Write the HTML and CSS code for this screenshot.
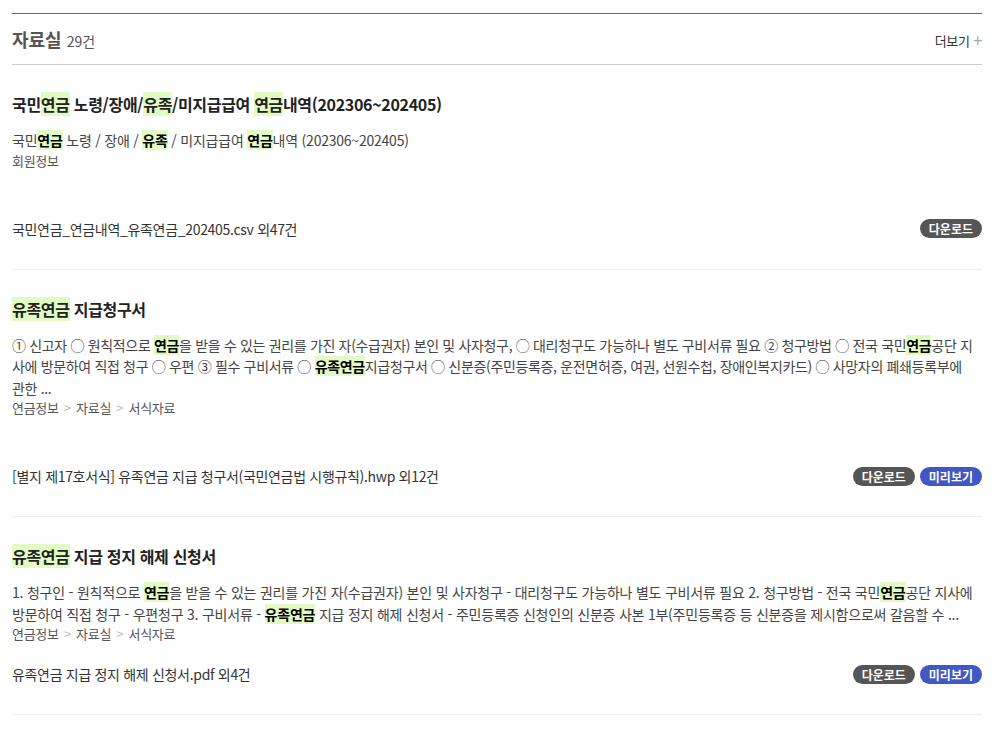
FILE: index.html
```html
<!DOCTYPE html>
<html lang="ko">
<head>
    <meta charset="UTF-8">
    <meta name="viewport" content="width=device-width, initial-scale=1.0">
    <title>자료실</title>
    <link rel="stylesheet" href="styles.css">
</head>
<body>

<div class="section">
    <div class="section-head">
        <h2>자료실 <span class="count">29건</span></h2>
        <a class="more" href="#">더보기 <span class="plus">+</span></a>
    </div>

    <div class="item">
        <h3 class="item-title">국민<em>연금</em> 노령/장애/<em>유족</em>/미지급급여 <em>연금</em>내역(202306~202405)</h3>
        <p class="desc">국민<em>연금</em> 노령 / 장애 / <em>유족</em> / 미지급급여 <em>연금</em>내역 (202306~202405)</p>
        <p class="path">회원정보</p>
        <div class="file-row spaced">
            <span class="file-name">국민연금_연금내역_유족연금_202405.csv 외47건</span>
            <div class="buttons">
                <a class="btn btn-down" href="#">다운로드</a>
            </div>
        </div>
    </div>

    <div class="item">
        <h3 class="item-title"><em>유족연금</em> 지급청구서</h3>
        <p class="desc tight">① 신고자 ◯ 원칙적으로 <em>연금</em>을 받을 수 있는 권리를 가진 자(수급권자) 본인 및 사자청구, ◯ 대리청구도 가능하나 별도 구비서류 필요 ② 청구방법 ◯ 전국 국민<em>연금</em>공단 지사에 방문하여 직접 청구 ◯ 우편 ③ 필수 구비서류 ◯ <em>유족연금</em>지급청구서 ◯ 신분증(주민등록증, 운전면허증, 여권, 선원수첩, 장애인복지카드) ◯ 사망자의 폐쇄등록부에<br>관한 ...</p>
        <p class="path">연금정보 <span class="sep">&gt;</span> 자료실 <span class="sep">&gt;</span> 서식자료</p>
        <div class="file-row spaced">
            <span class="file-name">[별지 제17호서식] 유족연금 지급 청구서(국민연금법 시행규칙).hwp 외12건</span>
            <div class="buttons">
                <a class="btn btn-down" href="#">다운로드</a>
                <a class="btn btn-view" href="#">미리보기</a>
            </div>
        </div>
    </div>

    <div class="item">
        <h3 class="item-title"><em>유족연금</em> 지급 정지 해제 신청서</h3>
        <p class="desc">1. 청구인 - 원칙적으로 <em>연금</em>을 받을 수 있는 권리를 가진 자(수급권자) 본인 및 사자청구 - 대리청구도 가능하나 별도 구비서류 필요 2. 청구방법 - 전국 국민<em>연금</em>공단 지사에 방문하여 직접 청구 - 우편청구 3. 구비서류 - <em>유족연금</em> 지급 정지 해제 신청서 - 주민등록증 신청인의 신분증 사본 1부(주민등록증 등 신분증을 제시함으로써 갈음할 수 ...</p>
        <p class="path">연금정보 <span class="sep">&gt;</span> 자료실 <span class="sep">&gt;</span> 서식자료</p>
        <div class="file-row">
            <span class="file-name">유족연금 지급 정지 해제 신청서.pdf 외4건</span>
            <div class="buttons">
                <a class="btn btn-down" href="#">다운로드</a>
                <a class="btn btn-view" href="#">미리보기</a>
            </div>
        </div>
    </div>
</div>

</body>
</html>
```

FILE: styles.css
```css
body {
    margin: 0;
    background-color: white;
    color: #333;
    font-family: "Noto Sans CJK KR", "Noto Sans", sans-serif;
    letter-spacing: -0.02em;
}
.section {
    width: 970px;
    margin: 13px 0 0 12px;
    border-top: 1px solid #666;
}
.section-head {
    display: flex;
    justify-content: space-between;
    align-items: center;
    height: 50px;
    border-bottom: 1px solid #ccc;
}
.section-head h2 {
    margin: 0;
    font-size: 18px;
    font-weight: bold;
    color: #555;
    letter-spacing: 0;
}
.count {
    font-size: 14px;
    font-weight: normal;
    color: #555;
}
.more {
    font-size: 13px;
    color: #333;
    text-decoration: none;
}
.plus {
    color: #aaa;
    font-size: 17px;
    vertical-align: -1px;
}
.item {
    padding: 27px 0 30px;
    border-bottom: 1px solid #eee;
}
.item-title {
    margin: 0 0 14px;
    font-size: 16px;
    font-weight: bold;
    color: #222;
    line-height: 24px;
}
em {
    font-style: normal;
    font-weight: bold;
    color: #000;
    background-color: #e2fbc4;
}
.item-title em {
    color: #222;
}
.desc {
    margin: 0;
    font-size: 14px;
    line-height: 21.5px;
    color: #444;
    letter-spacing: -0.016em;
}
.desc.tight {
    letter-spacing: -0.024em;
}
.path {
    margin: 0;
    font-size: 13px;
    line-height: 18px;
    color: #555;
}
.sep {
    color: #bbb;
    margin: 0 2px;
}
.file-row {
    display: flex;
    justify-content: space-between;
    align-items: center;
    margin-top: 21px;
    font-size: 14px;
    line-height: 20px;
    color: #333;
}
.file-row.spaced {
    margin-top: 49px;
}
.buttons {
    display: flex;
    gap: 5px;
}
.btn {
    display: inline-block;
    padding: 0 9px;
    height: 19px;
    line-height: 19px;
    border-radius: 10px;
    font-size: 12px;
    font-weight: bold;
    color: white;
    text-decoration: none;
    letter-spacing: 0;
}
.btn-down {
    background-color: #555;
}
.btn-view {
    background-color: #4057c4;
}
```
